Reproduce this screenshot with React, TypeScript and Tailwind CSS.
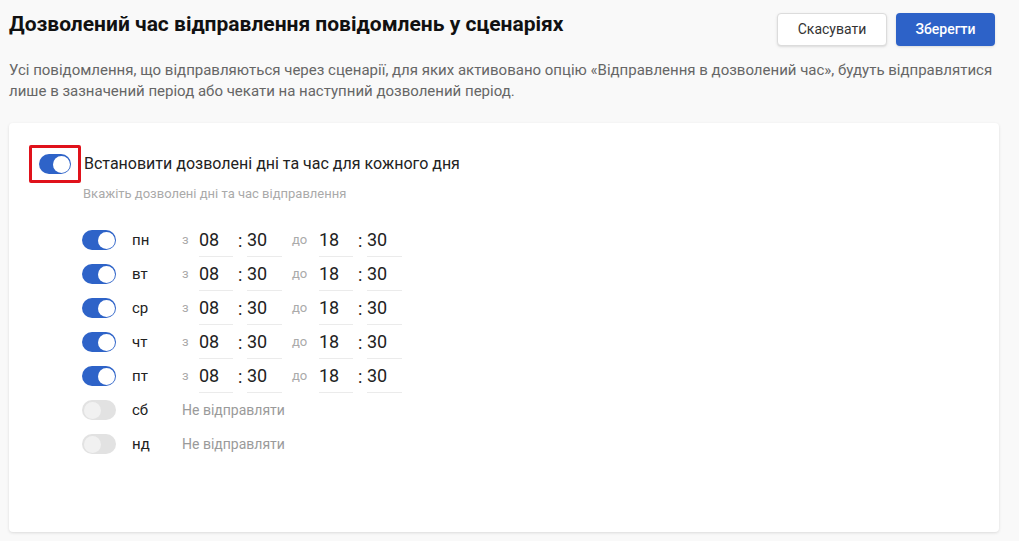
import React from 'react';

const DAYS = [
  { id: 'mon', label: 'пн', on: true },
  { id: 'tue', label: 'вт', on: true },
  { id: 'wed', label: 'ср', on: true },
  { id: 'thu', label: 'чт', on: true },
  { id: 'fri', label: 'пт', on: true },
  { id: 'sat', label: 'сб', on: false },
  { id: 'sun', label: 'нд', on: false },
];

function Toggle({ on, className = '' }: { on: boolean; className?: string }) {
  return (
    <div
      className={`relative h-[20px] rounded-full ${on ? 'bg-[#2e63c8]' : 'bg-[#e2e2e2]'} ${className}`}
    >
      <div
        className={`absolute top-[1.5px] w-[17px] h-[17px] rounded-full ${
          on ? 'right-[1.5px] bg-white' : 'left-[1.5px] bg-[#f1f1f1]'
        }`}
      />
    </div>
  );
}

function TimeInput({ value, w }: { value: string; w: string }) {
  return (
    <div className={`${w} h-[33px] flex items-center border-b border-[#ebebeb] text-[18px] text-[#222]`}>
      {value}
    </div>
  );
}

export default function App() {
  return (
    <div className="min-h-screen w-full bg-[#f9f9f9] px-[9px] font-['Roboto',sans-serif]">
      <div className="flex justify-between items-start pt-[10px]">
        <h1 className="text-[21px] leading-[29px] font-bold text-[#111]">
          Дозволений час відправлення повідомлень у сценаріях
        </h1>
        <div className="flex gap-[9px] mt-[3px] mr-[15px]">
          <button className="w-[110px] h-[33px] rounded-[4px] bg-white border border-[#dcdcdc] shadow-sm text-[14px] text-[#333]">
            Скасувати
          </button>
          <button className="w-[99px] h-[33px] rounded-[4px] bg-[#2d62c8] shadow-sm text-[14px] font-medium text-white">
            Зберегти
          </button>
        </div>
      </div>

      <p className="mt-[14px] text-[15px] leading-[21px] text-[#666] pr-[10px]">
        Усі повідомлення, що відправляються через сценарії, для яких активовано опцію «Відправлення в дозволений час», будуть відправлятися лише в зазначений період або чекати на наступний дозволений період.
      </p>

      <div className="mt-[21px] w-[990px] h-[409px] bg-white rounded-[4px] shadow-[0_1px_3px_rgba(0,0,0,0.12)] pt-[22px] pl-[20px]">
        <div className="flex items-center">
          <div className="w-[52px] h-[38px] border-[3px] border-[#e0121b] rounded-[2px] flex items-center justify-center">
            <Toggle on className="w-[32px]" />
          </div>
          <span className="ml-[3px] text-[16px] text-[#222]">
            Встановити дозволені дні та час для кожного дня
          </span>
        </div>
        <div className="ml-[54px] mt-[2px] text-[13px] leading-[18px] text-[#aaa]">
          Вкажіть дозволені дні та час відправлення
        </div>

        <div className="ml-[53px] mt-[20px] flex flex-col">
          {DAYS.map((d) => (
            <div key={d.id} className="flex items-center h-[34px]">
              <Toggle on={d.on} className="w-[34px]" />
              <span className="ml-[16px] w-[50px] text-[15px] text-[#222]">{d.label}</span>
              {d.on ? (
                <div className="flex items-center">
                  <span className="w-[17px] text-[13px] text-[#aaa]">з</span>
                  <TimeInput value="08" w="w-[34px]" />
                  <span className="w-[14px] pl-[5px] text-[18px] text-[#222]">:</span>
                  <TimeInput value="30" w="w-[35px]" />
                  <span className="w-[37px] pl-[10px] text-[13px] text-[#aaa]">до</span>
                  <TimeInput value="18" w="w-[34px]" />
                  <span className="w-[14px] pl-[5px] text-[18px] text-[#222]">:</span>
                  <TimeInput value="30" w="w-[35px]" />
                </div>
              ) : (
                <span className="text-[14px] text-[#9a9a9a]">Не відправляти</span>
              )}
            </div>
          ))}
        </div>
      </div>
    </div>
  );
}
